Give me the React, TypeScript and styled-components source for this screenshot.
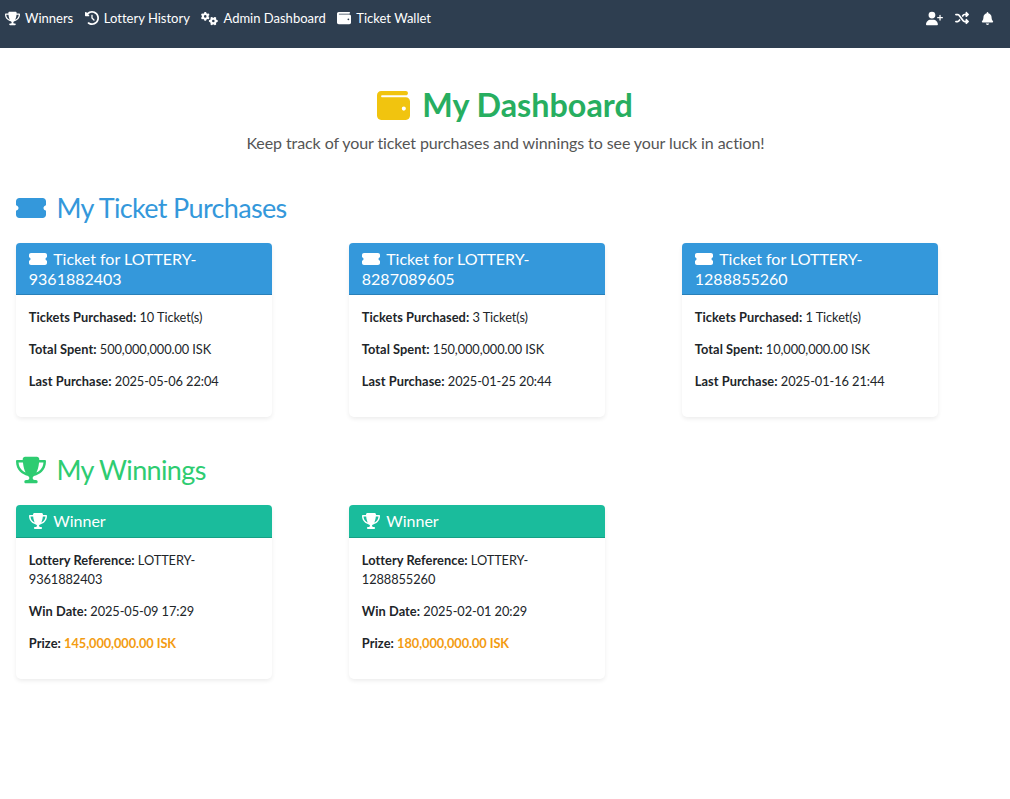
import React from 'react';
import styled, { createGlobalStyle } from 'styled-components';
import type { IconType } from 'react-icons';
import {
  FaTrophy, FaClockRotateLeft, FaGears, FaWallet, FaUserPlus, FaShuffle, FaBell, FaTicketSimple,
} from 'react-icons/fa6';

const GlobalStyle = createGlobalStyle`
  *, *::before, *::after { box-sizing: border-box; }
  html, body { margin: 0; background: #fff; }
  body {
    font: 400 12.8px/1.5 Lato, sans-serif;
    font-variant-ligatures: none;
    color: #212529;
  }
  svg { display: block; flex: none; }
  h1, h2, h3, p { margin: 0; }
`;

const NavBar = styled.nav`
  display: flex;
  justify-content: space-between;
  height: 48px;
  padding: 8px 16px 0 5px;
  background: #2e3e50;
  color: #fff;
`;

const NavGroup = styled.div<{ $gap: number }>`
  display: flex;
  gap: ${p => p.$gap}px;
  height: 20px;
`;

const NavLink = styled.a<{ $gap: number }>`
  display: flex;
  align-items: center;
  gap: ${p => p.$gap}px;
  font-size: 13px;
  line-height: 20px;
  white-space: nowrap;
`;

const Page = styled.main`
  padding: 37px 16px 24px;
`;

const Hero = styled.header`
  text-align: center;
`;

const Title = styled.h1`
  display: flex;
  justify-content: center;
  align-items: center;
  gap: 12px;
  height: 38px;
  padding-top: 2px;
  font-size: 32.3px;
  font-weight: 700;
  color: #27ae60;
  svg { color: #f1c40f; }
`;

const Lead = styled.p`
  margin-top: 7.6px;
  padding-left: 1px;
  font-size: 16px;
  line-height: 24px;
  letter-spacing: -0.09px;
  color: #555;
`;

const Section = styled.section<{ $top: number }>`
  margin-top: ${p => p.$top}px;
`;

const SectionTitle = styled.h2<{ $color: string }>`
  display: flex;
  align-items: center;
  gap: 10.5px;
  height: 32px;
  font-size: 27px;
  font-weight: 400;
  letter-spacing: -0.65px;
  color: ${p => p.$color};
`;

const CardGrid = styled.div`
  display: grid;
  grid-template-columns: repeat(3, 256px);
  column-gap: 77px;
  margin-top: 19.4px;
`;

const Card = styled.article`
  height: 174px;
  border-radius: 5px;
  background: #fff;
  box-shadow: 0 2px 4px rgba(0, 0, 0, 0.075);
`;

const CardHeader = styled.h3<{ $bg: string; $line: string }>`
  min-height: 33px;
  padding: 5.6px 12.8px;
  border-bottom: 1px solid ${p => p.$line};
  border-radius: 4px 4px 0 0;
  background: ${p => p.$bg};
  color: #fff;
  font-size: 16px;
  font-weight: 400;
  line-height: 20px;
  svg {
    display: inline-block;
    vertical-align: -3px;
    margin-right: 6.4px;
  }
`;

const CardBody = styled.div`
  padding: 12.8px;
`;

const Field = styled.p`
  margin-bottom: 12.8px;
  letter-spacing: -0.08px;
`;

const Label = styled.strong`
  font-weight: 700;
  letter-spacing: 0.06px;
`;

const Prize = styled.strong`
  font-weight: 700;
  color: #f39c12;
`;

const links: { icon: IconType; label: string; size: number; gap: number }[] = [
  { icon: FaTrophy, label: 'Winners', size: 15, gap: 5 },
  { icon: FaClockRotateLeft, label: 'Lottery History', size: 14, gap: 5 },
  { icon: FaGears, label: 'Admin Dashboard', size: 17, gap: 5 },
  { icon: FaWallet, label: 'Ticket Wallet', size: 14, gap: 5 },
];

const purchases = [
  { id: '9361882403', count: 10, spent: '500,000,000.00', date: '2025-05-06 22:04' },
  { id: '8287089605', count: 3, spent: '150,000,000.00', date: '2025-01-25 20:44' },
  { id: '1288855260', count: 1, spent: '10,000,000.00', date: '2025-01-16 21:44' },
];

const winnings = [
  { id: '9361882403', date: '2025-05-09 17:29', prize: '145,000,000.00' },
  { id: '1288855260', date: '2025-02-01 20:29', prize: '180,000,000.00' },
];

export default function App() {
  return (
    <>
      <GlobalStyle />
      <NavBar>
        <NavGroup $gap={11.6}>
          {links.map(({ icon: Icon, label, size, gap }) => (
            <NavLink key={label} $gap={gap}><Icon size={size} />{label}</NavLink>
          ))}
        </NavGroup>
        <NavGroup $gap={12}>
          <NavLink $gap={0}><FaUserPlus size={17} /></NavLink>
          <NavLink $gap={0}><FaShuffle size={14} /></NavLink>
          <NavLink $gap={0}><FaBell size={13} /></NavLink>
        </NavGroup>
      </NavBar>
      <Page>
        <Hero>
          <Title><FaWallet size={33} />My Dashboard</Title>
          <Lead>Keep track of your ticket purchases and winnings to see your luck in action!</Lead>
        </Hero>
        <Section $top={37.2}>
          <SectionTitle $color="#3498db"><FaTicketSimple size={30} />My Ticket Purchases</SectionTitle>
          <CardGrid>
            {purchases.map(p => (
              <Card key={p.id}>
                <CardHeader $bg="#3498db" $line="#2980b9">
                  <FaTicketSimple size={18} />Ticket for LOTTERY-{p.id}
                </CardHeader>
                <CardBody>
                  <Field><Label>Tickets Purchased:</Label> {p.count} Ticket(s)</Field>
                  <Field><Label>Total Spent:</Label> {p.spent} ISK</Field>
                  <Field><Label>Last Purchase:</Label> {p.date}</Field>
                </CardBody>
              </Card>
            ))}
          </CardGrid>
        </Section>
        <Section $top={36.6}>
          <SectionTitle $color="#2ecc71"><FaTrophy size={30} />My Winnings</SectionTitle>
          <CardGrid>
            {winnings.map(w => (
              <Card key={w.id}>
                <CardHeader $bg="#1abc9c" $line="#16a085"><FaTrophy size={18} />Winner</CardHeader>
                <CardBody>
                  <Field><Label>Lottery Reference:</Label> LOTTERY-{w.id}</Field>
                  <Field><Label>Win Date:</Label> {w.date}</Field>
                  <Field><Label>Prize:</Label> <Prize>{w.prize} ISK</Prize></Field>
                </CardBody>
              </Card>
            ))}
          </CardGrid>
        </Section>
      </Page>
    </>
  );
}
